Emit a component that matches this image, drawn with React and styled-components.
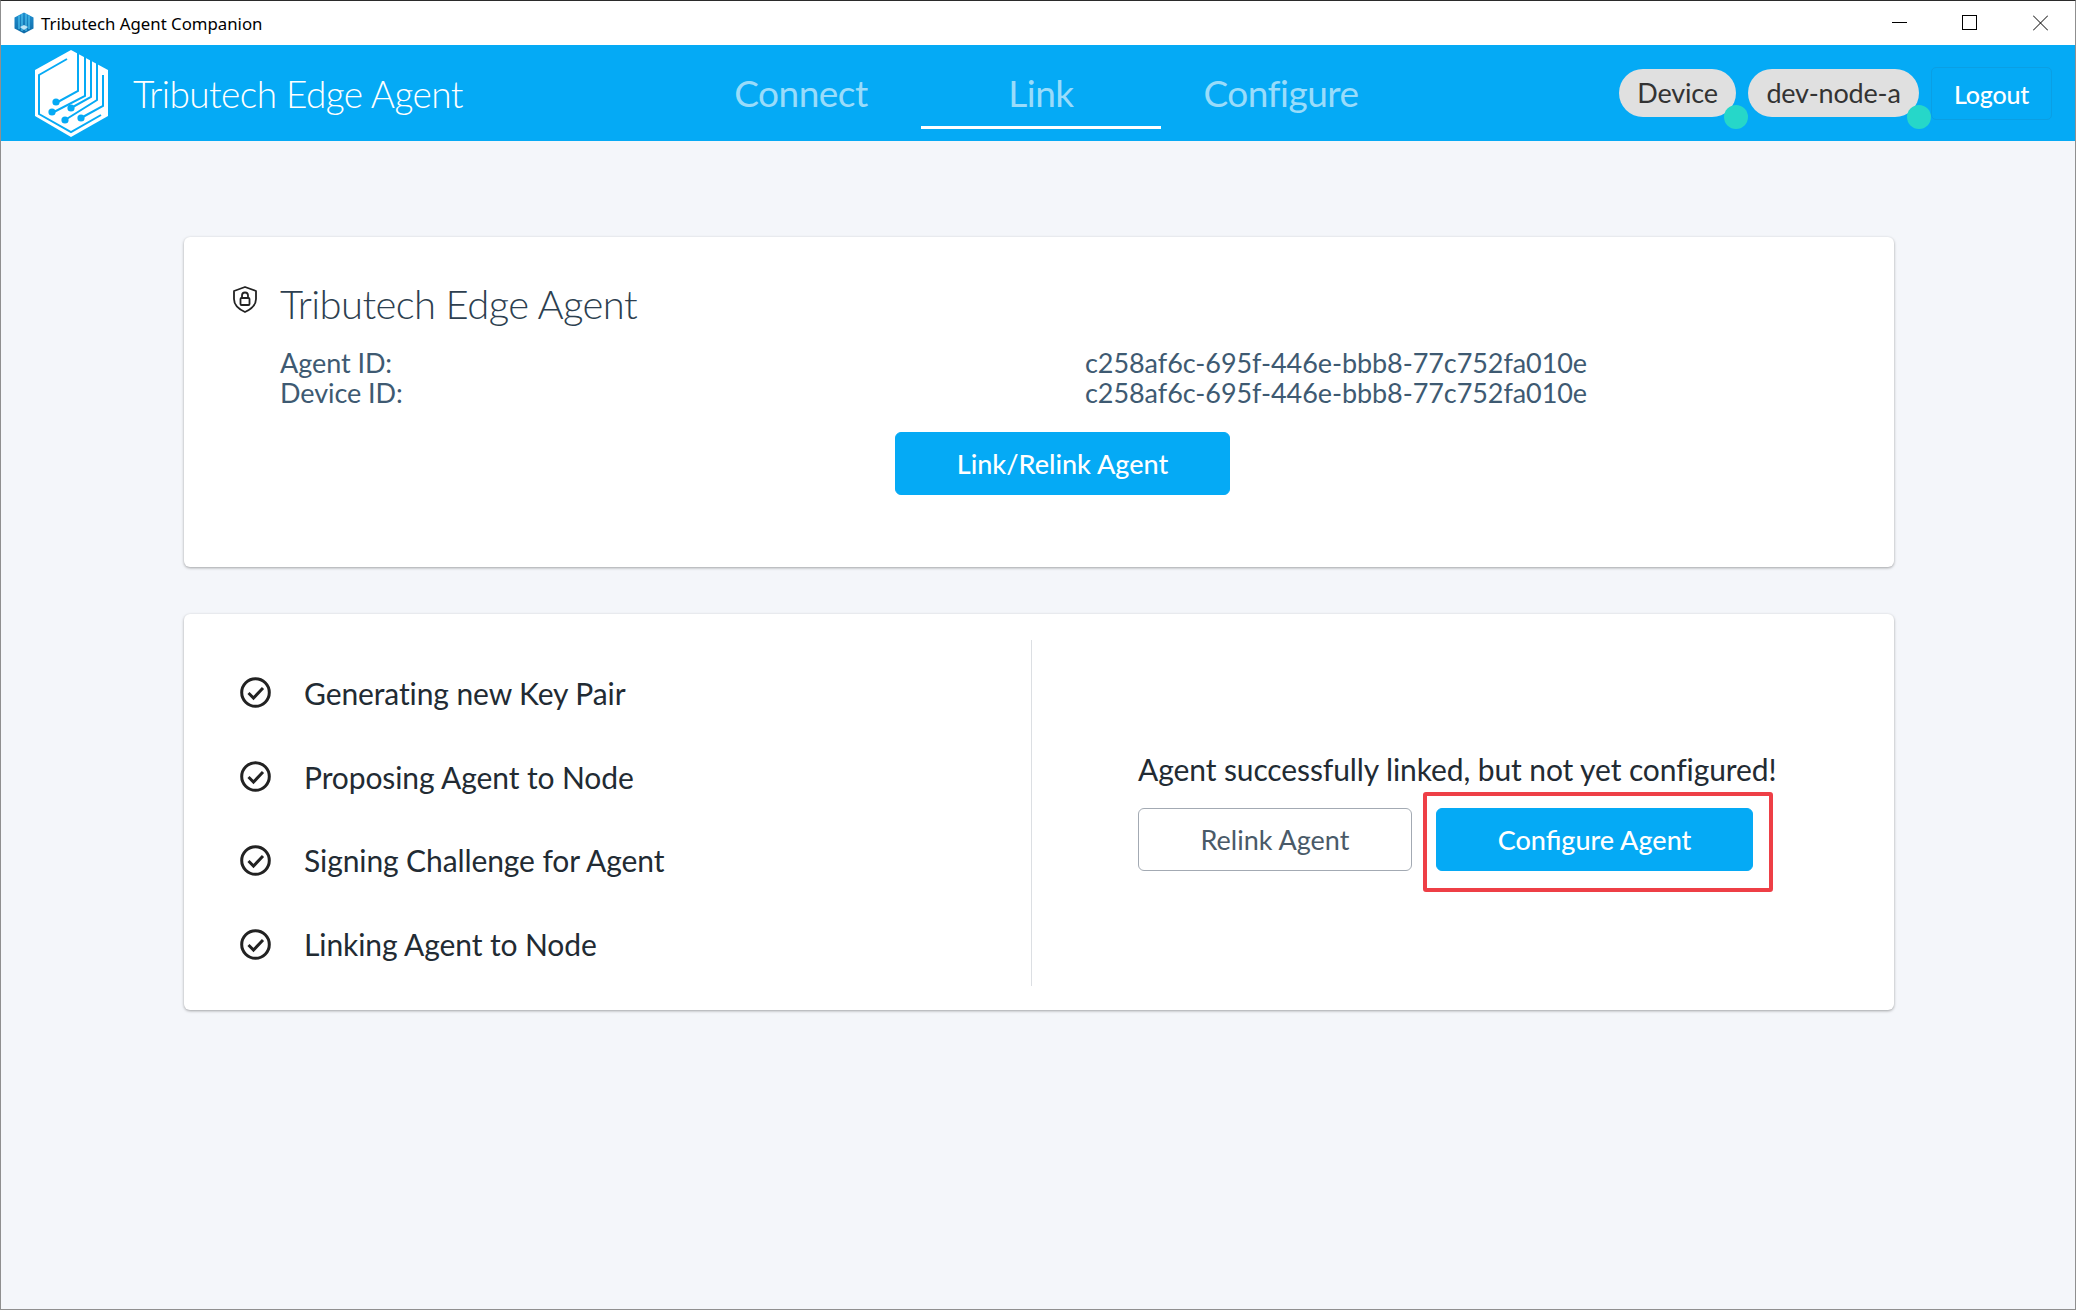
import React from 'react';
import styled, { createGlobalStyle } from 'styled-components';

const GlobalStyle = createGlobalStyle`
  html, body {
    margin: 0;
    padding: 0;
    background: #f4f6fa;
  }
  * {
    box-sizing: border-box;
  }
`;

const Window = styled.div`
  width: 2076px;
  height: 1310px;
  display: flex;
  flex-direction: column;
  background: #f4f6fa;
  border: 1px solid #8f8f8f;
  border-top-color: #2b2b2b;
  font-family: Lato, sans-serif;
  overflow: hidden;
`;

const TitleBar = styled.div`
  height: 44px;
  flex: none;
  display: flex;
  align-items: center;
  background: #fff;
  padding-left: 13px;
`;

const WindowTitle = styled.span`
  margin-left: 7px;
  font-family: "Noto Sans", sans-serif;
  font-size: 16.8px;
  color: #000;
`;

const WindowControls = styled.div`
  margin-left: auto;
  display: flex;
  align-items: center;
  padding-right: 27px;
  gap: 55px;
`;

const Header = styled.header`
  height: 96px;
  flex: none;
  display: flex;
  align-items: center;
  background: #05aaf5;
  padding-left: 25px;
`;

const Brand = styled.div`
  width: 655px;
  display: flex;
  align-items: center;
  gap: 17px;
  color: #fff;
  font-size: 37px;
  font-weight: 300;
  letter-spacing: -0.58px;
`;

const Nav = styled.nav`
  display: flex;
  height: 100%;
`;

const Tab = styled.div`
  width: 240px;
  display: flex;
  align-items: center;
  justify-content: center;
  font-size: 37px;
  letter-spacing: -0.5px;
  color: rgba(255, 255, 255, 0.6);
  border-bottom: 3px solid ${(props) => (props.$active ? '#fff' : 'transparent')};
  margin-bottom: 12px;
  padding-top: 14px;
`;

const HeaderRight = styled.div`
  margin-left: auto;
  display: flex;
  align-items: center;
  padding-right: 23px;
`;

const Pill = styled.div`
  position: relative;
  height: 48px;
  width: ${(props) => props.$width}px;
  margin-right: 12px;
  padding-bottom: 1px;
  display: flex;
  align-items: center;
  justify-content: center;
  background: #e0e0e0;
  border-radius: 24px;
  color: #333;
  font-size: 27px;
  letter-spacing: -0.2px;
  &::after {
    content: '';
    position: absolute;
    right: -12px;
    bottom: -12px;
    width: 24px;
    height: 24px;
    border-radius: 50%;
    background: #26d7c9;
  }
`;

const LogoutButton = styled.button`
  width: 121px;
  height: 53px;
  margin-top: 1px;
  background: transparent;
  border: 1px solid #0a9fe4;
  border-radius: 5px;
  color: #fff;
  font-family: Lato, sans-serif;
  font-size: 25px;
  font-weight: 500;
  letter-spacing: -0.2px;
`;

const Main = styled.main`
  flex: 1;
  display: flex;
  flex-direction: column;
  gap: 47px;
  padding: 96px 181px 0 183px;
`;

const Card = styled.section`
  background: #fff;
  border-radius: 6px;
  box-shadow: 0 1px 3px rgba(0, 0, 0, 0.35);
`;

const AgentCard = styled(Card)`
  height: 330px;
  padding: 41px 49px 0;
`;

const CardTitle = styled.div`
  display: flex;
  align-items: flex-start;
  gap: 23px;
  height: 52px;
  font-size: 40px;
  font-weight: 300;
  line-height: 52px;
  letter-spacing: -0.6px;
  color: #2d3f50;
`;

const ShieldIcon = styled.svg`
  margin-top: 8px;
  flex: none;
`;

const IdGrid = styled.div`
  display: grid;
  grid-template-columns: 805px 1fr;
  margin: 18px 0 24px 47px;
  font-size: 27px;
  line-height: 30px;
  letter-spacing: -0.07px;
  color: #3e5a72;
`;

const ButtonRow = styled.div`
  display: flex;
  justify-content: center;
  padding-left: 47px;
`;

const Button = styled.button`
  width: ${(props) => props.$width}px;
  height: 63px;
  border-radius: 6px;
  border: 1px solid ${(props) => (props.$outline ? '#a3aab3' : '#05aaf5')};
  background: ${(props) => (props.$outline ? '#fff' : '#05aaf5')};
  color: ${(props) => (props.$outline ? '#4a5a68' : '#fff')};
  font-family: Lato, sans-serif;
  font-size: 27px;
  font-weight: ${(props) => (props.$outline ? 400 : 500)};
`;

const StatusCard = styled(Card)`
  height: 396px;
  padding: 26px 0 24px;
  display: flex;
`;

const Steps = styled.ul`
  width: 848px;
  margin: 0;
  padding: 11px 0 0 56px;
  list-style: none;
  display: flex;
  flex-direction: column;
  border-right: 1px solid #dcdfe3;
`;

const Step = styled.li`
  height: 84px;
  display: flex;
  align-items: center;
  gap: 33px;
  font-size: 30px;
  letter-spacing: -0.1px;
  color: #222b33;
`;

const Result = styled.div`
  display: flex;
  flex-direction: column;
  padding: 109px 0 0 106px;
`;

const ResultText = styled.div`
  font-size: 30px;
  line-height: 40px;
  letter-spacing: -0.1px;
  color: #222b33;
  margin-bottom: 19px;
`;

const ResultButtons = styled.div`
  display: flex;
  gap: 24px;
`;

const Highlight = styled.div`
  position: relative;
  &::after {
    content: '';
    position: absolute;
    left: -13px;
    top: -16px;
    right: -20px;
    bottom: -21px;
    border: 4px solid #ee3f46;
    border-radius: 3px;
  }
`;

const AppIcon = () => (
  <svg width="20" height="22" viewBox="0 0 20 22">
    <defs>
      <linearGradient id="appIconFill" x1="0" y1="0" x2="0" y2="1">
        <stop offset="0" stopColor="#1f8fd0" />
        <stop offset="1" stopColor="#0f6ba8" />
      </linearGradient>
    </defs>
    <path d="M10 0.5 19.5 5.5V16.5L10 21.5 0.5 16.5V5.5Z" fill="url(#appIconFill)" />
    <path d="M5 3.5V17M8 2V19M12 2V19M15 3.5V17" stroke="#4fc3ef" strokeWidth="1.2" />
    <path d="M6 15l4-2 4 2-4 3z" fill="#bfe6f7" />
  </svg>
);

const Logo = () => (
  <svg width="90" height="96" viewBox="0 0 90 96">
    <path d="M45 5 82 25V71L45 92 9 71V25Z" fill="#fff" />
    <g fill="none" stroke="#05aaf5" strokeWidth="2">
      <path d="M41 14 13 30V69L45 87 75 70" />
      <path d="M52 5V46L30 58" />
      <path d="M59 9V51L26 68" />
      <path d="M65 13V52L45 63" />
      <path d="M71 18V55L39 75" />
      <path d="M77 30V61L55 73" />
    </g>
    <g fill="#05aaf5">
      <circle cx="30" cy="57" r="3.6" />
      <circle cx="26" cy="67" r="3.6" />
      <circle cx="45" cy="63" r="3.6" />
      <circle cx="39" cy="75" r="3.6" />
      <circle cx="55" cy="73" r="3.6" />
    </g>
  </svg>
);

const Shield = () => (
  <ShieldIcon width="24" height="27" viewBox="0 0 24 27" fill="none" stroke="#222" strokeWidth="1.8">
    <path d="M12 1 23 5V13C23 19.5 17.5 23.5 12 26 6.5 23.5 1 19.5 1 13V5Z" strokeLinejoin="round" />
    <rect x="7.5" y="12" width="9" height="7" rx="1" />
    <path d="M9 12V9.5A3 3 0 0 1 15 9.5V12" />
  </ShieldIcon>
);

const CheckCircle = () => (
  <svg width="31" height="31" viewBox="0 0 31 31" fill="none" stroke="#222" strokeWidth="3">
    <circle cx="15.5" cy="15.5" r="13.8" />
    <path d="M8.5 16 13.5 21 23 11" />
  </svg>
);

const WindowButtons = () => (
  <WindowControls>
    <svg width="15" height="16" viewBox="0 0 15 16" stroke="#000" fill="none">
      <path d="M0 7.5H15" />
    </svg>
    <svg width="16" height="16" viewBox="0 0 16 16" stroke="#000" fill="none">
      <rect x="0.5" y="0.5" width="14" height="14" />
    </svg>
    <svg width="15" height="16" viewBox="0 0 15 16" stroke="#000" fill="none">
      <path d="M0 0.5 15 15.5M15 0.5 0 15.5" />
    </svg>
  </WindowControls>
);

const steps = [
  'Generating new Key Pair',
  'Proposing Agent to Node',
  'Signing Challenge for Agent',
  'Linking Agent to Node',
];

const App = () => {
  return (
    <Window>
      <GlobalStyle />
      <TitleBar>
        <AppIcon />
        <WindowTitle>Tributech Agent Companion</WindowTitle>
        <WindowButtons />
      </TitleBar>
      <Header>
        <Brand>
          <Logo />
          Tributech Edge Agent
        </Brand>
        <Nav>
          <Tab>Connect</Tab>
          <Tab $active>Link</Tab>
          <Tab>Configure</Tab>
        </Nav>
        <HeaderRight>
          <Pill $width={117}>Device</Pill>
          <Pill $width={171}>dev-node-a</Pill>
          <LogoutButton>Logout</LogoutButton>
        </HeaderRight>
      </Header>
      <Main>
        <AgentCard>
          <CardTitle>
            <Shield />
            Tributech Edge Agent
          </CardTitle>
          <IdGrid>
            <span>Agent ID:</span>
            <span>c258af6c-695f-446e-bbb8-77c752fa010e</span>
            <span>Device ID:</span>
            <span>c258af6c-695f-446e-bbb8-77c752fa010e</span>
          </IdGrid>
          <ButtonRow>
            <Button $width={335}>Link/Relink Agent</Button>
          </ButtonRow>
        </AgentCard>
        <StatusCard>
          <Steps>
            {steps.map((step) => (
              <Step key={step}>
                <CheckCircle />
                {step}
              </Step>
            ))}
          </Steps>
          <Result>
            <ResultText>Agent successfully linked, but not yet configured!</ResultText>
            <ResultButtons>
              <Button $outline $width={274}>Relink Agent</Button>
              <Highlight>
                <Button $width={317}>Configure Agent</Button>
              </Highlight>
            </ResultButtons>
          </Result>
        </StatusCard>
      </Main>
    </Window>
  );
};

export default App;
